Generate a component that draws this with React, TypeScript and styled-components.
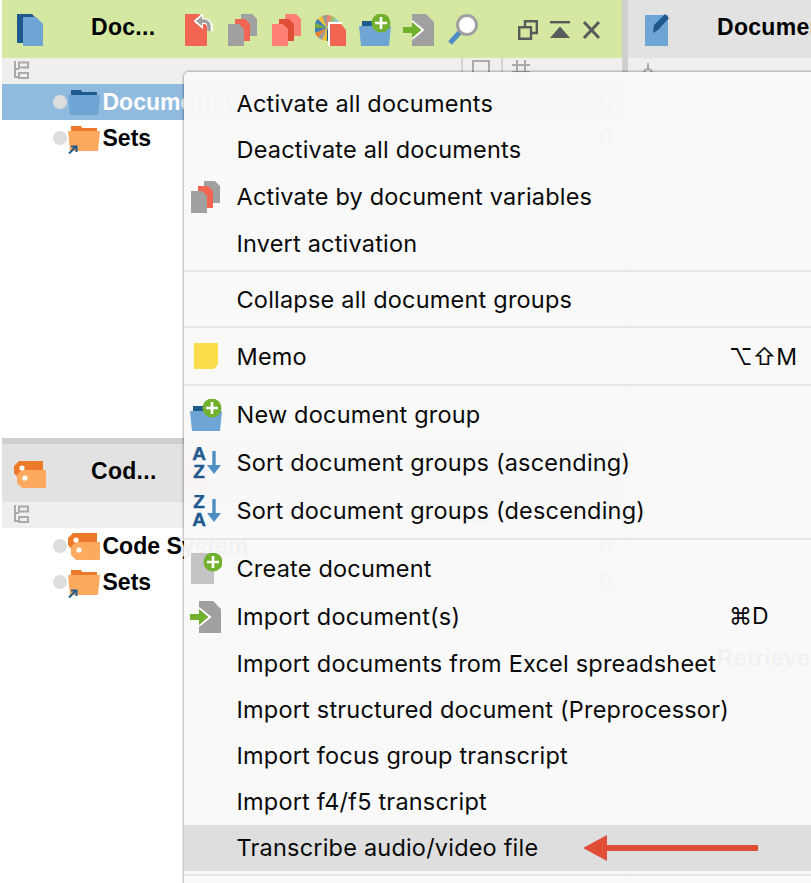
import styled, { createGlobalStyle } from "styled-components";

const BLUE = "#6fa5d4";
const NAVY = "#1f5a8e";
const RED = "#f26552";
const SALMON = "#ff8074";
const GRAY = "#a0a0a0";
const ORANGE = "#ec7a2a";
const PEACH = "#fdaa60";
const GREEN = "#72b12e";

const PIE = ["#f0846a", "#9cc06a", "#86c6e0", "#f26552", "#f2c037", "#3f7fb0", "#ef7d2b", NAVY, "#f2c037", "#999", "#ef7d2b", "#3f7fb0", "#7aa83c", "#3f7fb0", "#f2c037", "#999"];

function wedge(i: number) {
  const step = (Math.PI * 2) / PIE.length;
  const a = i * step - Math.PI / 2;
  const b = a + step;
  const p = (t: number) => `${(12 + 13 * Math.cos(t)).toFixed(2)} ${(14 + 13 * Math.sin(t)).toFixed(2)}`;
  return `M12 14L${p(a)}A13 13 0 0 1 ${p(b)}Z`;
}

function Box({ children }: { children: React.ReactNode }) {
  return (
    <svg width="32" height="32" viewBox="0 0 32 32">
      {children}
    </svg>
  );
}

const DocLogo = () => (
  <Box>
    <path d="M3 0h15l3 3H9v26H3z" fill={NAVY} />
    <path d="M9 3h13l7 7v22H9z" fill={BLUE} />
  </Box>
);

const UndoDoc = () => (
  <Box>
    <path d="M2 0h14l8 8v24H2z" fill={RED} />
    <path d="M13 7h8a6 6 0 0 1 6 6v4" fill="none" stroke="#fff" strokeWidth="6" />
    <path d="M12 7l7-6v12z" fill="#fff" stroke="#fff" strokeWidth="2" />
    <path d="M15 7h6a5 5 0 0 1 5 5v5" fill="none" stroke={GRAY} strokeWidth="3.5" />
    <path d="M13 7l6-5v10z" fill={GRAY} />
  </Box>
);

const StackDocs = ({ back, middle, front }: { back: string; middle: string; front: string }) => (
  <Box>
    <path d="M14 0h11l5 5v17H14z" fill={back} />
    <path d="M8 5h10l5 5v17H8z" fill={middle} />
    <path d="M1 10h11l5 5v17H1z" fill={front} />
  </Box>
);

const PieDoc = () => (
  <Box>
    {PIE.map((color, i) => (
      <path key={i} d={wedge(i)} fill={color} />
    ))}
    <path d="M13 8h14v2H15v22h-2z" fill="#fff" />
    <path d="M15 10h11l5 6v16H15z" fill={RED} />
  </Box>
);

const PlusBadge = ({ cx, cy }: { cx: number; cy: number }) => (
  <g>
    <circle cx={cx} cy={cy} r="9.5" fill={GREEN} />
    <path d={`M${cx - 6} ${cy}h12M${cx} ${cy - 6}v12`} stroke="#fff" strokeWidth="2.6" />
  </g>
);

const NewFolder = () => (
  <Box>
    <path d="M3 7h12v6H3z" fill={NAVY} />
    <path d="M0 12h32l-2 20H2z" fill={BLUE} />
    <PlusBadge cx={22} cy={9} />
  </Box>
);

const ImportDoc = () => (
  <Box>
    <path d="M9 0h14l8 8v24H9z" fill={GRAY} />
    <path d="M9 7l11 9-11 9" fill="none" stroke="#fff" strokeWidth="2" />
    <path d="M0 13h9V8l9 8-9 8v-5H0z" fill={GREEN} />
  </Box>
);

const Magnifier = () => (
  <Box>
    <path d="M13 18L3 29" stroke="#4f8ec4" strokeWidth="5" />
    <circle cx="20" cy="11" r="9.5" fill="#fff" stroke={GRAY} strokeWidth="3" />
  </Box>
);

const ToolbarIcons = () => (
  <IconStrip>
    <UndoDoc />
    <StackDocs back={GRAY} middle={RED} front={GRAY} />
    <StackDocs back={SALMON} middle="#e04e35" front={SALMON} />
    <PieDoc />
    <NewFolder />
    <ImportDoc />
    <Magnifier />
  </IconStrip>
);

const WindowControls = () => (
  <ControlStrip>
    <svg width="20" height="20" viewBox="0 0 20 20" fill="none" stroke="#5a5a5a" strokeWidth="2.4">
      <path d="M7 7V1.2h11.8V13H13" />
      <path d="M1.2 7.2H13V18.8H1.2z" />
    </svg>
    <svg width="20" height="20" viewBox="0 0 20 20" fill="#5a5a5a">
      <path d="M0 1h20v2.4H0z" />
      <path d="M0 18L10 6.500 20 18z" />
    </svg>
    <svg width="20" height="20" viewBox="0 0 20 20" fill="none" stroke="#5a5a5a" strokeWidth="3">
      <path d="M2 2l15 16M17 2L2 18" />
    </svg>
  </ControlStrip>
);

const TreeIcon = () => (
  <svg width="16" height="18" viewBox="0 0 16 18" fill="none" stroke="#aaa" strokeWidth="2">
    <path d="M2 0v16h4M2 8h4" />
    <path d="M6 1.500h9v5H6zM6 6.500h9M6 12h9v5H6z" />
  </svg>
);

const SubBarTools = () => (
  <>
    <SubCell $width={40}>
      <svg width="18" height="18" viewBox="0 0 18 18" fill="none" stroke="#aaa" strokeWidth="2">
        <path d="M1 1h16v16H1z" />
      </svg>
    </SubCell>
    <SubCell $width={121}>
      <svg width="18" height="18" viewBox="0 0 18 18" fill="none" stroke="#aaa" strokeWidth="2">
        <path d="M5 0v18M13 0v18M0 5h18M0 12h18" />
      </svg>
    </SubCell>
  </>
);

const FolderIcon = ({ tab, body, link }: { tab: string; body: string; link?: boolean }) => (
  <Box>
    <path d="M3 4h10l1 2h15v4H3z" fill={tab} />
    <path d="M0 9h32l-2 20H2z" fill={body} />
    {link && (
      <g fill="none" stroke={NAVY} strokeWidth="2">
        <path d="M1 31.500l7-7" />
        <path d="M3 24.500h5.500V30" />
      </g>
    )}
  </Box>
);

const TagIcon = () => (
  <Box>
    <path d="M0 8l5-5h24v9H10L4 20 0 15z" fill={ORANGE} />
    <path d="M8 12h24v18H8l-5-5v-8z" fill={PEACH} />
    <circle cx="8" cy="10" r="2.600" fill="#fff" />
    <circle cx="11" cy="20" r="2.600" fill="#fff" />
  </Box>
);

const EditDoc = () => (
  <Box>
    <path d="M5 1h23v31H5z" fill={BLUE} />
    <path d="M13 19l1-8L25 0l4 4-11 12z" fill={NAVY} />
  </Box>
);

const MemoIcon = () => (
  <Box>
    <path d="M4 2h24v21l-4 5H4z" fill="#fbdc4a" />
  </Box>
);

const SortIcon = ({ top, bottom }: { top: string; bottom: string }) => (
  <Box>
    <SortLetter x="9" y="13">{top}</SortLetter>
    <SortLetter x="9" y="31">{bottom}</SortLetter>
    <path d="M24 4v16" stroke="#4f8ec4" strokeWidth="3.400" />
    <path d="M17 18h14l-7 9z" fill="#4f8ec4" />
  </Box>
);

const CreateIcon = () => (
  <Box>
    <path d="M1 0h23v31H1z" fill="#c4c4c4" />
    <PlusBadge cx={23} cy={9} />
  </Box>
);

type MenuEntry =
  | { kind: "sep" }
  | { kind: "item"; label: string; height: number; nudge?: number; icon?: React.ReactNode; shortcut?: string; active?: boolean };

const item = (label: string, height: number, extra?: Partial<Omit<Extract<MenuEntry, { kind: "item" }>, "kind" | "label" | "height">>): MenuEntry => ({
  kind: "item",
  label,
  height,
  ...extra,
});

const MENU: MenuEntry[] = [
  item("Activate all documents", 46),
  item("Deactivate all documents", 46),
  item("Activate by document variables", 47, { icon: <StackDocs back={GRAY} middle={RED} front={GRAY} /> }),
  item("Invert activation", 47),
  { kind: "sep" },
  item("Collapse all document groups", 48, { nudge: 2 }),
  { kind: "sep" },
  item("Memo", 50, { nudge: 2, icon: <MemoIcon />, shortcut: "⌥⇧M" }),
  { kind: "sep" },
  item("New document group", 50, { nudge: 2, icon: <NewFolder /> }),
  item("Sort document groups (ascending)", 48, { icon: <SortIcon top="A" bottom="Z" /> }),
  item("Sort document groups (descending)", 48, { icon: <SortIcon top="Z" bottom="A" /> }),
  { kind: "sep" },
  item("Create document", 50, { nudge: 2, icon: <CreateIcon /> }),
  item("Import document(s)", 47, { icon: <ImportDoc />, shortcut: "⌘D" }),
  item("Import documents from Excel spreadsheet", 47),
  item("Import structured document (Preprocessor)", 46),
  item("Import focus group transcript", 46),
  item("Import f4/f5 transcript", 46),
  item("Transcribe audio/video file", 46, { active: true }),
  { kind: "sep" },
];

function App() {
  return (
    <Screen>
      <GlobalStyle />
      <LeftColumn>
        <TopPanel>
          <Toolbar $tone="#d4e8a2">
            <DocLogo />
            <ToolbarTitle>Doc...</ToolbarTitle>
            <ToolbarIcons />
            <WindowControls />
          </Toolbar>
          <SubBar>
            <TreeIcon />
            <SubBarTools />
          </SubBar>
          <TreeRow $selected>
            <Dot />
            <FolderIcon tab={NAVY} body={BLUE} />
            <RowLabel>Documents</RowLabel>
            <RowCount>0</RowCount>
          </TreeRow>
          <TreeRow>
            <Dot />
            <FolderIcon tab={ORANGE} body={PEACH} link />
            <RowLabel>Sets</RowLabel>
            <RowCount>0</RowCount>
          </TreeRow>
        </TopPanel>
        <PanelRule />
        <Toolbar $tone="#e2e2e2">
          <TagIcon />
          <ToolbarTitle>Cod...</ToolbarTitle>
          <IconStrip>
            <UndoDoc />
          </IconStrip>
        </Toolbar>
        <SubBar>
          <TreeIcon />
          <SubBarTools />
        </SubBar>
        <TreeRow>
          <Dot />
          <TagIcon />
          <RowLabel>Code System</RowLabel>
          <RowCount>0</RowCount>
        </TreeRow>
        <TreeRow>
          <Dot />
          <FolderIcon tab={ORANGE} body={PEACH} link />
          <RowLabel>Sets</RowLabel>
          <RowCount>0</RowCount>
        </TreeRow>
      </LeftColumn>
      <Gutter />
      <RightColumn>
        <Toolbar $tone="#e2e2e2" $inset={12}>
          <EditDoc />
          <ToolbarTitle>Document Browser</ToolbarTitle>
        </Toolbar>
        <SubBar $inset={13}>
          <svg width="14" height="18" viewBox="0 0 14 18" fill="none" stroke="#aaa" strokeWidth="2">
            <path d="M7 2v6" />
            <circle cx="7" cy="12" r="4" />
          </svg>
        </SubBar>
        <RetrievedHeader>
          <ToolbarTitle>Retrieved Segments</ToolbarTitle>
        </RetrievedHeader>
      </RightColumn>
      <Menu>
        {MENU.map((entry, i) =>
          entry.kind === "sep" ? (
            <MenuSeparator key={i} />
          ) : (
            <MenuRow key={i} $height={entry.height} $nudge={entry.nudge} $active={entry.active}>
              <MenuIconSlot>{entry.icon}</MenuIconSlot>
              <MenuLabel>
                <span>{entry.label}</span>
                {entry.active && (
                  <CalloutArrow width="175" height="26" viewBox="0 0 175 26">
                    <path d="M0 13L24 0v10h151v6H24v10z" fill="#e04e35" />
                  </CalloutArrow>
                )}
              </MenuLabel>
              {entry.shortcut && <Shortcut>{entry.shortcut}</Shortcut>}
            </MenuRow>
          )
        )}
      </Menu>
    </Screen>
  );
}

const GlobalStyle = createGlobalStyle`
  html, body {
    margin: 0;
    padding: 0;
    background: #fff;
    font-family: "Liberation Sans", Arial, sans-serif;
  }
`;

const Screen = styled.div`
  position: relative;
  display: flex;
  width: 811px;
  height: 883px;
  padding-left: 2px;
  box-sizing: border-box;
  overflow: hidden;
  background: #fff;
`;

const LeftColumn = styled.div`
  display: flex;
  flex-direction: column;
  width: 620px;
  flex: none;
`;

const TopPanel = styled.div`
  height: 438px;
  flex: none;
`;

const PanelRule = styled.div`
  height: 6px;
  background: #cfcfcf;
`;

const Gutter = styled.div`
  width: 6px;
  flex: none;
  background: #cfcfcf;
`;

const RightColumn = styled.div`
  display: flex;
  flex-direction: column;
  flex: 1;
  min-width: 0;
`;

const Toolbar = styled.div<{ $tone: string; $inset?: number }>`
  display: flex;
  align-items: flex-start;
  height: 58px;
  box-sizing: border-box;
  padding: 14px 0 0 ${(p) => p.$inset ?? 12}px;
  background: ${(p) => p.$tone};
  flex: none;
  white-space: nowrap;
`;

const ToolbarTitle = styled.div`
  width: 92px;
  margin-left: 45px;
  font-size: 23px;
  font-weight: 700;
  letter-spacing: 0.3px;
  line-height: 27px;
  color: #000;
  flex: none;
`;

const IconStrip = styled.div`
  display: flex;
  gap: 12px;
  flex: none;
`;

const ControlStrip = styled.div`
  display: flex;
  gap: 12px;
  margin: 6px 0 0 39px;
  flex: none;
`;

const SubBar = styled.div<{ $inset?: number }>`
  display: flex;
  align-items: flex-start;
  justify-content: space-between;
  height: 26px;
  box-sizing: border-box;
  padding: 3px 0 0 ${(p) => p.$inset ?? 11}px;
  background: #efefef;
  flex: none;
`;

const SubCell = styled.div<{ $width: number }>`
  width: ${(p) => p.$width}px;
  height: 26px;
  box-sizing: border-box;
  margin-top: -3px;
  padding: 2px 0 0 9px;
  border-left: 2px solid #d4d4d4;
  overflow: hidden;
  flex: none;
  &:first-of-type {
    margin-left: auto;
  }
  & + & {
    margin-left: 0;
  }
`;

const TreeRow = styled.div<{ $selected?: boolean }>`
  display: flex;
  align-items: center;
  height: 36px;
  padding-left: 51px;
  background: ${(p) => (p.$selected ? "#90bade" : "transparent")};
  color: ${(p) => (p.$selected ? "#fff" : "#000")};
`;

const Dot = styled.div`
  width: 14px;
  height: 14px;
  margin-right: 1px;
  border-radius: 50%;
  background: #ddd;
  flex: none;
`;

const RowLabel = styled.span`
  margin-left: 2.5px;
  font-size: 23px;
  font-weight: 700;
`;

const RowCount = styled.span`
  margin-left: auto;
  padding-right: 10px;
  font-size: 23px;
  font-weight: 700;
  color: #777;
`;

const RetrievedHeader = styled.div`
  display: flex;
  align-items: center;
  height: 58px;
  margin-top: 545px;
  padding-left: 44px;
  white-space: nowrap;
  background: #ececec;
`;

const Menu = styled.div`
  position: absolute;
  left: 184px;
  top: 72px;
  width: 640px;
  height: 830px;
  padding-top: 9px;
  box-sizing: border-box;
  border-radius: 5px 0 0 0;
  background: rgba(249, 249, 249, 0.97);
  box-shadow: 0 0 3px rgba(0, 0, 0, 0.6);
  font-family: Inter, "Liberation Sans", sans-serif;
`;

const MenuRow = styled.div<{ $height: number; $nudge?: number; $active?: boolean }>`
  display: flex;
  align-items: center;
  gap: 14.5px;
  height: ${(p) => p.$height}px;
  box-sizing: border-box;
  padding: ${(p) => p.$nudge ?? 0}px 0 0 6px;
  background: ${(p) => (p.$active ? "#dedede" : "transparent")};
  color: #0a0a0a;
  font-size: 23.5px;
  letter-spacing: 0.2px;
  white-space: nowrap;
`;

const MenuIconSlot = styled.div`
  display: flex;
  width: 32px;
  height: 32px;
  flex: none;
`;

const MenuLabel = styled.div`
  display: flex;
  align-items: center;
  flex: 1;
  min-width: 0;
  padding-bottom: 1px;
`;

const Shortcut = styled.div`
  width: 95px;
  flex: none;
  padding-bottom: 1px;
  font-size: 23px;
  letter-spacing: 0;
`;

const MenuSeparator = styled.div`
  height: 2px;
  margin: 3px 0;
  background: #e6e6e6;
`;

const CalloutArrow = styled.svg`
  margin-left: 45px;
  flex: none;
`;

const SortLetter = styled.text`
  font-family: "Liberation Sans", Arial, sans-serif;
  font-size: 19px;
  font-weight: 700;
  fill: ${NAVY};
  stroke: ${NAVY};
  stroke-width: 0.4px;
  letter-spacing: 0;
  text-anchor: middle;
`;

export default App;
